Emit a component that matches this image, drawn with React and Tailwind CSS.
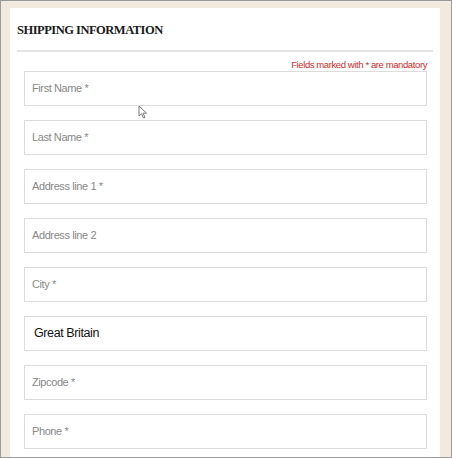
const fields = [
  { label: 'First Name *' },
  { label: 'Last Name *' },
  { label: 'Address line 1 *' },
  { label: 'Address line 2' },
  { label: 'City *' },
  { label: 'Great Britain', value: true },
  { label: 'Zipcode *' },
  { label: 'Phone *' },
];

const Cursor = () => (
  <svg className="absolute left-[137px] top-[104px]" width="10" height="14" viewBox="0 0 10 14">
    <path d="M1 1 L1 11 L3.5 8.8 L5.5 13 L7 12.3 L5 8.2 L8.5 8.2 Z" fill="#fff" stroke="#777" strokeWidth="1" />
  </svg>
);

export default function App() {
  return (
    <div className="relative w-[452px] h-[458px] overflow-hidden border border-[#9a9a9a] bg-[#f2eadf] pl-[9px] pr-[11px] pt-[7px]">
      <div className="bg-white h-[470px] px-[7px] pt-[13px]" style={{ fontFamily: '"Liberation Sans", Arial, sans-serif' }}>
        <h2 className="text-[12.5px] font-bold text-[#1a1a1a] leading-[18px] tracking-[-0.5px]" style={{ fontFamily: '"Liberation Serif", "Times New Roman", serif' }}>
          SHIPPING INFORMATION
        </h2>
        <div className="mt-[11px] h-[2px] bg-[#e4e4e4]" />
        <p className="mt-[7px] pr-[6px] text-right text-[9.5px] leading-[12px] tracking-[-0.4px] text-[#c9302c]">
          Fields marked with * are mandatory
        </p>
        <div className="pl-[7px] pr-[6px] flex flex-col gap-[14px]">
          {fields.map((f) => (
            <div
              key={f.label}
              className="h-[35px] border border-[#dcdcdc] flex items-center"
            >
              {f.value ? (
                <span className="pl-[9px] text-[12.5px] tracking-[-0.4px] text-[#111]">{f.label}</span>
              ) : (
                <span className="pl-[7px] text-[11px] tracking-[-0.4px] text-[#888]">{f.label}</span>
              )}
            </div>
          ))}
        </div>
      </div>
      <Cursor />
    </div>
  );
}
